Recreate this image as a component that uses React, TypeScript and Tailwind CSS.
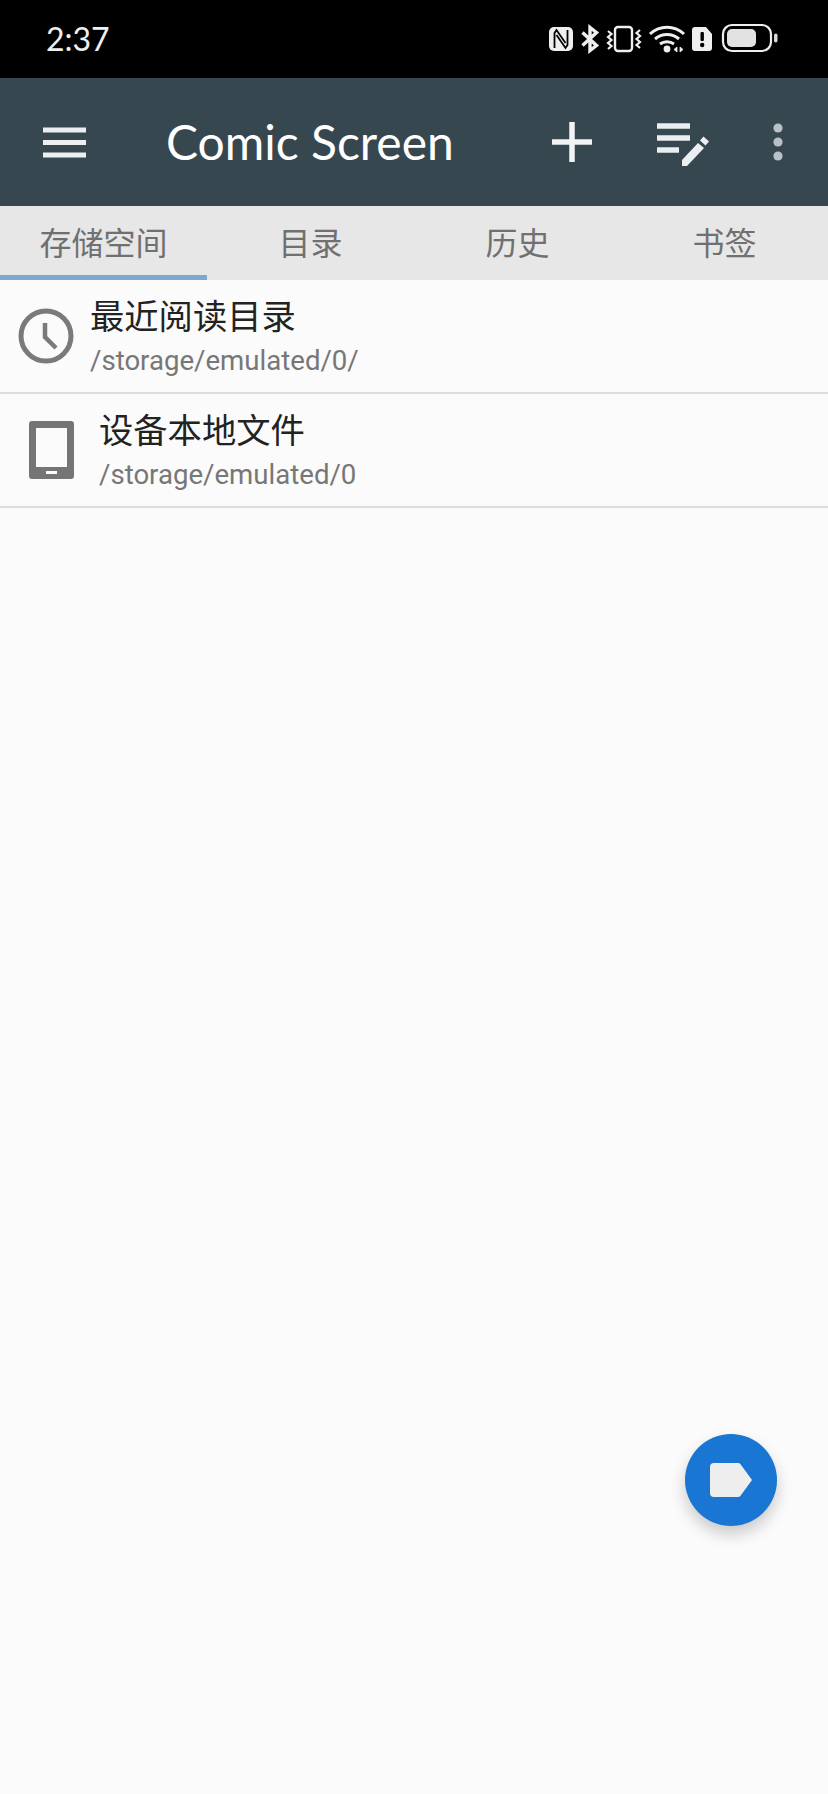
const CJK = `font-['Roboto','Noto_Sans_CJK_SC',sans-serif]`;

function StatusIcons() {
  return (
    <svg width="229" height="32" viewBox="0 0 229 32" className="block">
      {/* NFC */}
      <rect x="0" y="4" width="24" height="24" rx="5" fill="#efefef" />
      <path d="M5.500 25V10l2-3 9 13M18.500 7v15l-2 3-9-13" fill="none" stroke="#000" strokeWidth="1.800" />
      {/* Bluetooth */}
      <path d="M33.500 9.500l14 13-6.500 5V4.500l6.500 5-14 13" fill="none" stroke="#efefef" strokeWidth="3.400" />
      {/* Vibrate */}
      <rect x="66" y="4" width="17" height="24" rx="3" fill="none" stroke="#efefef" strokeWidth="2.400" />
      <path d="M59 8l3.500 3-3.500 3 3.500 3-3.500 3 3.500 3-3.500 3" fill="none" stroke="#efefef" strokeWidth="2.200" />
      <path d="M91 7l-3.500 3 3.500 3-3.500 3 3.500 3-3.500 3 3.500 3" fill="none" stroke="#efefef" strokeWidth="2.200" />
      {/* WiFi */}
      <path d="M101 11c10-9 24-9 34 0" fill="none" stroke="#efefef" strokeWidth="3" />
      <path d="M106 16c7-6 17-6 24 0" fill="none" stroke="#efefef" strokeWidth="3" />
      <path d="M111 21c4-3 10-3 14 0" fill="none" stroke="#efefef" strokeWidth="3" />
      <circle cx="118" cy="26" r="3.400" fill="#efefef" />
      <path d="M128 24v5l-3-2.500zM131 24v5l3-2.500z" fill="#efefef" stroke="#efefef" strokeWidth="0.800" />
      {/* SIM alert */}
      <path d="M146 4h11l6 7v14a3 3 0 0 1-3 3h-14a3 3 0 0 1-3-3V7a3 3 0 0 1 3-3z" fill="#efefef" />
      <rect x="151.500" y="9" width="3.400" height="9" rx="1" fill="#000" />
      <circle cx="153.200" cy="22" r="2.200" fill="#000" />
      {/* Battery */}
      <rect x="174" y="2" width="48" height="26" rx="9" fill="none" stroke="#efefef" strokeWidth="2.200" />
      <rect x="178" y="6" width="29" height="18" rx="5" fill="#e2e2e2" />
      <rect x="225" y="10.500" width="3.500" height="9" rx="1.700" fill="#d8d8d8" />
    </svg>
  );
}

function MenuIcon() {
  return (
    <svg width="43" height="31" viewBox="0 0 43 31" className="block">
      <path d="M0 3h43M0 15.500h43M0 28h43" stroke="#eceff1" strokeWidth="5" />
    </svg>
  );
}

function PlusIcon() {
  return (
    <svg width="40" height="40" viewBox="0 0 40 40" className="block">
      <path d="M20 0v40M0 20h40" stroke="#f1f3f4" strokeWidth="5.500" />
    </svg>
  );
}

function EditListIcon() {
  return (
    <svg width="52" height="44" viewBox="0 0 52 44" className="block">
      <path d="M0 3h33M0 15h33M0 27h22" stroke="#eceff1" strokeWidth="5.500" />
      <path d="M25 43v-6l16-17 6 5-17 18z" fill="#eceff1" />
      <path d="M43 17.500l3.500-4 5.500 5-3.500 4z" fill="#eceff1" />
    </svg>
  );
}

function DotsIcon() {
  return (
    <svg width="10" height="38" viewBox="0 0 10 38" className="block">
      <circle cx="5" cy="5" r="4.600" fill="#b7c1c6" />
      <circle cx="5" cy="19" r="4.600" fill="#b7c1c6" />
      <circle cx="5" cy="33" r="4.600" fill="#b7c1c6" />
    </svg>
  );
}

function ClockIcon() {
  return (
    <svg width="56" height="56" viewBox="0 0 56 56" className="block">
      <circle cx="28" cy="28" r="25" fill="none" stroke="#7a7a7a" strokeWidth="5" />
      <path d="M27 15v14l11 11" fill="none" stroke="#7a7a7a" strokeWidth="4.500" />
    </svg>
  );
}

function TabletIcon() {
  return (
    <svg width="45" height="58" viewBox="0 0 45 58" className="block">
      <path fillRule="evenodd" d="M3 0h39a3 3 0 0 1 3 3v52a3 3 0 0 1-3 3H3a3 3 0 0 1-3-3V3a3 3 0 0 1 3-3zM7 7v39h31V7zM17 50v3h11v-3z" fill="#757575" />
    </svg>
  );
}

function LabelIcon() {
  return (
    <svg width="42" height="34" viewBox="0 0 42 34" className="block">
      <path d="M4 0h24a3 3 0 0 1 2.500 1.300L42 17 30.500 32.700A3 3 0 0 1 28 34H4a4 4 0 0 1-4-4V4a4 4 0 0 1 4-4z" fill="#eeeeee" />
    </svg>
  );
}

function Row({ icon, title, path, textPad, iconPad }: { icon: React.ReactNode; title: string; path: string; textPad: string; iconPad: string }) {
  return (
    <div className="flex h-[114px] items-stretch border-b-2 border-[#dddddd]">
      <div className={`w-[90px] flex items-center justify-center shrink-0 ${iconPad}`}>{icon}</div>
      <div className={`flex flex-col ${textPad}`}>
        <div className="text-[34.300px] leading-[40px] text-[#222222] mt-[17px]">{title}</div>
        <div className="text-[27.600px] leading-[34px] text-[#777777] mt-[7px]">{path}</div>
      </div>
    </div>
  );
}

export default function App() {
  const tabs = ["存储空间", "目录", "历史", "书签"];
  return (
    <div className={`w-[828px] h-[1794px] bg-[#fbfbfb] relative overflow-hidden ${CJK}`}>
      <div className="h-[78px] bg-black flex items-center justify-between pl-[46px] pr-[50px]">
        <span className="text-[32px] text-[#efefef] font-['Lato',sans-serif] leading-none">2:37</span>
        <StatusIcons />
      </div>
      <div className="h-[128px] bg-[#37474f] flex items-center">
        <div className="w-[124px] pl-[43px]"><MenuIcon /></div>
        <div className="text-[48px] text-white flex-1 pl-[42px] font-['Lato',sans-serif]">Comic Screen</div>
        <div className="mr-[65px]"><PlusIcon /></div>
        <div className="mr-[64px] mt-[6px]"><EditListIcon /></div>
        <div className="mr-[45px]"><DotsIcon /></div>
      </div>
      <div className="h-[74px] bg-[#e6e7e6] grid grid-cols-4 relative">
        {tabs.map((t) => (
          <div key={t} className="flex items-center justify-center text-[32px] text-[#707070] pt-[1px]">
            {t}
          </div>
        ))}
        <div className="absolute left-0 bottom-0 w-[207px] h-[5px] bg-[#7ba9d0]" />
      </div>
      <Row icon={<ClockIcon />} title="最近阅读目录" path="/storage/emulated/0/" textPad="" iconPad="pl-[2px]" />
      <Row icon={<TabletIcon />} title="设备本地文件" path="/storage/emulated/0" textPad="ml-[9px]" iconPad="pl-[12px]" />
      <button className="absolute left-[685px] top-[1434px] w-[92px] h-[92px] rounded-full bg-[#1976d2] flex items-center justify-center shadow-[0_8px_16px_rgba(0,0,0,0.2)]">
        <LabelIcon />
      </button>
    </div>
  );
}
